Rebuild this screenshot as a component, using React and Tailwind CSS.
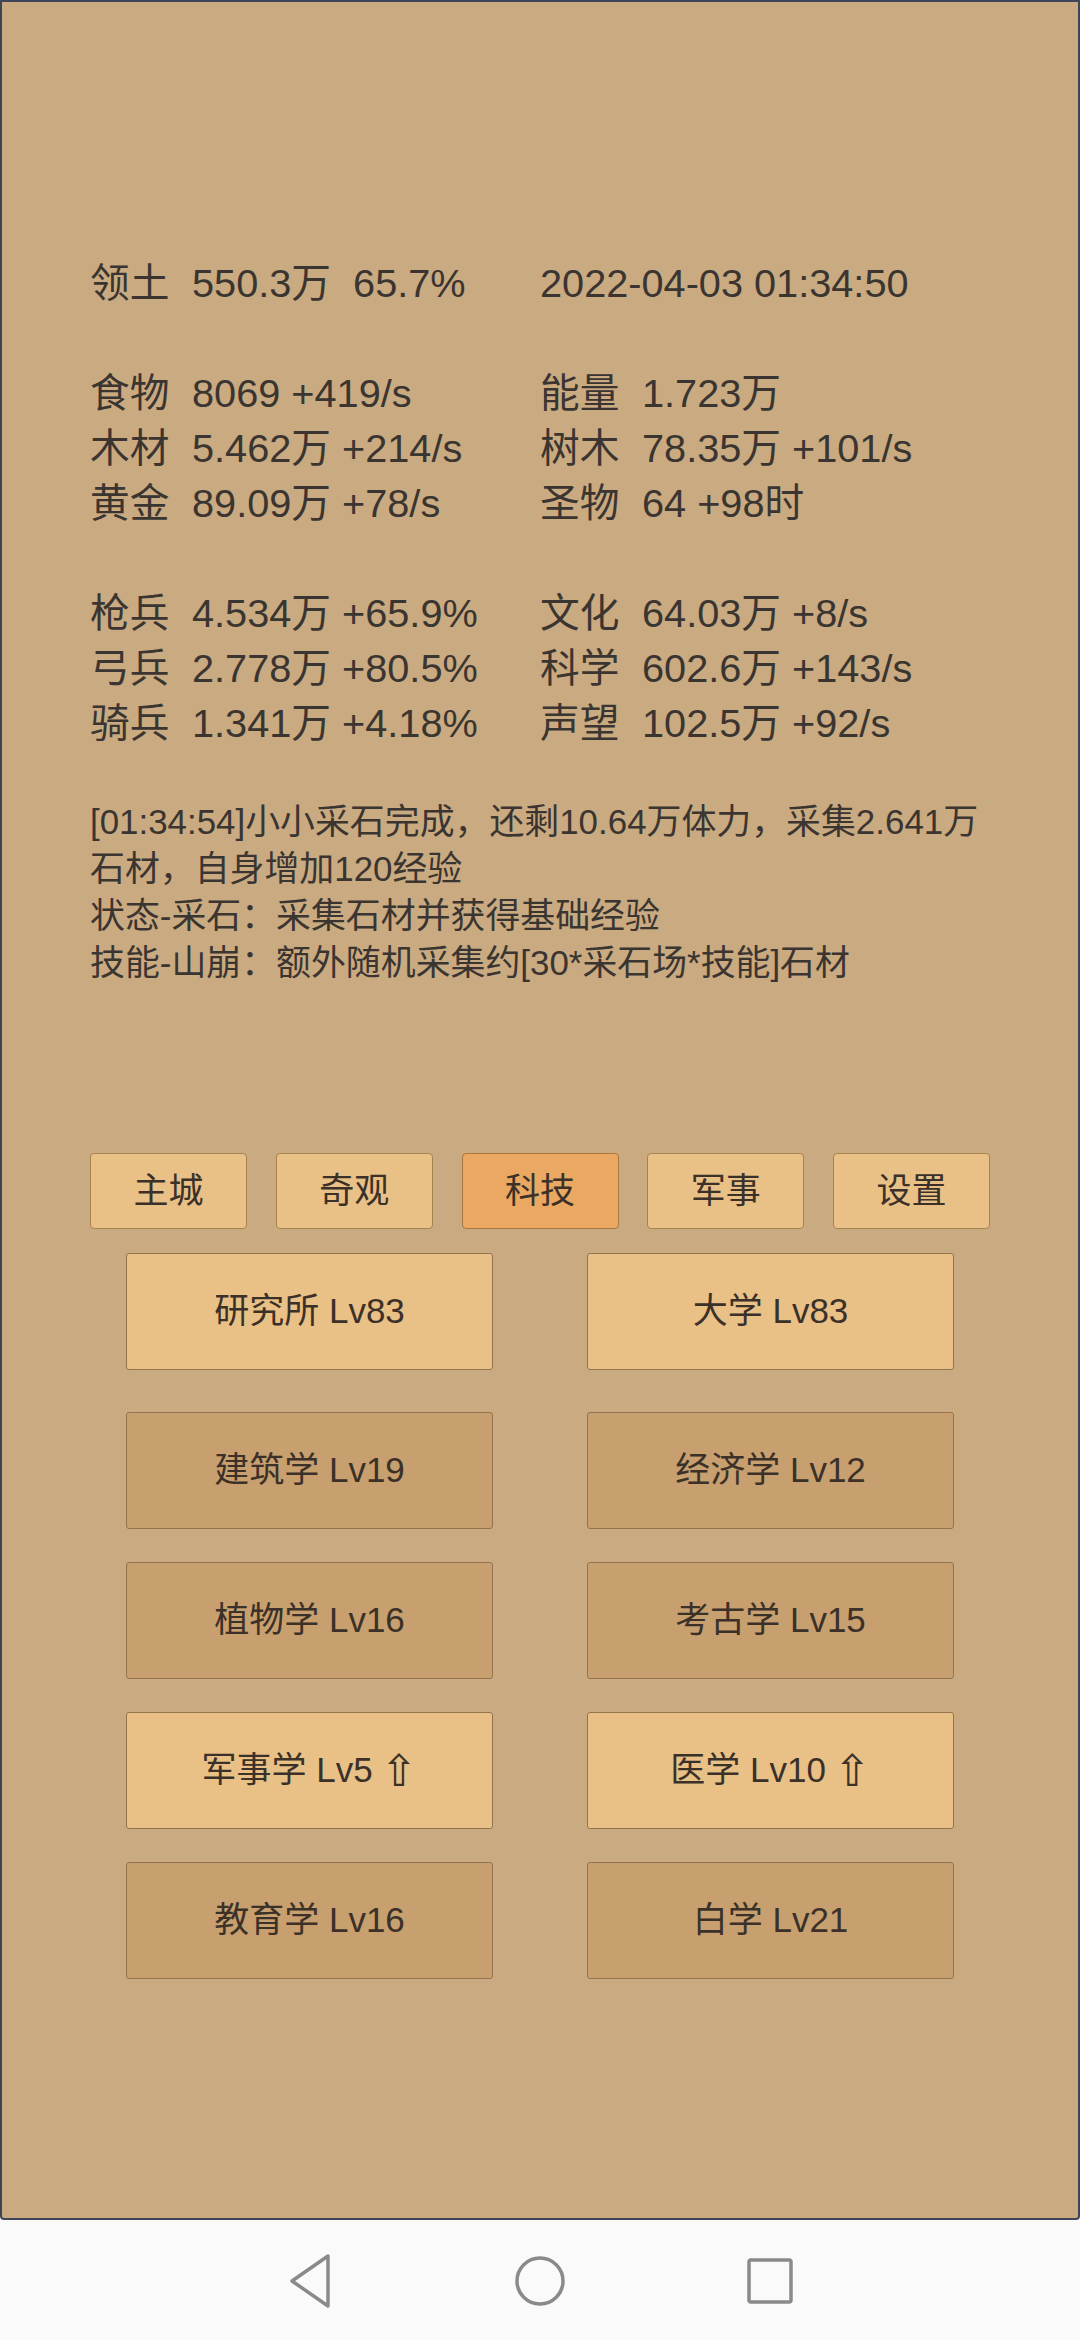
import React from "react";

const FONT = { fontFamily: '"Liberation Sans", "Noto Sans CJK SC", sans-serif' };

const left = [
  ["领土", "550.3万  65.7%"],
  null,
  ["食物", "8069 +419/s"],
  ["木材", "5.462万 +214/s"],
  ["黄金", "89.09万 +78/s"],
  null,
  ["枪兵", "4.534万 +65.9%"],
  ["弓兵", "2.778万 +80.5%"],
  ["骑兵", "1.341万 +4.18%"],
];
const right = [
  [null, "2022-04-03 01:34:50"],
  null,
  ["能量", "1.723万"],
  ["树木", "78.35万 +101/s"],
  ["圣物", "64 +98时"],
  null,
  ["文化", "64.03万 +8/s"],
  ["科学", "602.6万 +143/s"],
  ["声望", "102.5万 +92/s"],
];

function Cell({ item }) {
  if (!item) return <div className="h-[55px]" />;
  const [label, value] = item;
  return (
    <div className="h-[55px] flex items-center whitespace-pre">
      {label ? <span className="w-[102px] shrink-0">{label}</span> : null}
      <span>{value}</span>
    </div>
  );
}

const tabs = ["主城", "奇观", "科技", "军事", "设置"];

const rows = [
  [["研究所 Lv83", true], ["大学 Lv83", true]],
  [["建筑学 Lv19", false], ["经济学 Lv12", false]],
  [["植物学 Lv16", false], ["考古学 Lv15", false]],
  [["军事学 Lv5", true, true], ["医学 Lv10", true, true]],
  [["教育学 Lv16", false], ["白学 Lv21", false]],
];

function Btn({ text, light, up }) {
  return (
    <div
      className={
        "w-[367px] h-[117px] flex items-center justify-center rounded-[3px] border border-[#94744f] text-[35px] text-[#3b3128] " +
        (light ? "bg-[#e9c086]" : "bg-[#c89f6e]")
      }
    >
      <span>{text}</span>
      {up ? (
        <span className="ml-[8px] text-[44px] leading-none" style={{ fontFamily: '"DejaVu Sans", sans-serif' }}>
          ⇧
        </span>
      ) : null}
    </div>
  );
}

export default function App() {
  return (
    <div className="w-[1080px] h-[2340px] flex flex-col bg-[#fafafa]" style={FONT}>
      <div className="h-[2220px] bg-[#caaa80] border-2 border-[#3f4558] rounded-b-[4px] flex flex-col px-[88px] text-[#3a3531]">
        <div className="mt-[254px] flex text-[39.7px]">
          <div className="w-[450px] flex flex-col">
            {left.map((it, i) => (
              <Cell key={i} item={it} />
            ))}
          </div>
          <div className="flex flex-col">
            {right.map((it, i) => (
              <Cell key={i} item={it} />
            ))}
          </div>
        </div>
        <div className="mt-[47px] w-[900px] text-[34.9px] leading-[47px]">
          <p>[01:34:54]小小采石完成，还剩10.64万体力，采集2.641万石材，自身增加120经验</p>
          <p>状态-采石：采集石材并获得基础经验</p>
          <p>技能-山崩：额外随机采集约[30*采石场*技能]石材</p>
        </div>
        <div className="mt-[167px] w-[900px] flex justify-between">
          {tabs.map((t) => (
            <div
              key={t}
              className={
                "w-[157px] h-[76px] flex items-center justify-center rounded-[4px] border text-[35px] text-[#3b3128] " +
                (t === "科技" ? "bg-[#eba862] border-[#a9773f]" : "bg-[#e9c086] border-[#a8834f]")
              }
            >
              {t}
            </div>
          ))}
        </div>
        <div className="flex flex-col px-[36px] mt-[24px]">
          {rows.map((r, i) => (
            <div
              key={i}
              className={"flex justify-between " + (i === 0 ? "" : i === 1 ? "mt-[42px]" : "mt-[33px]")}
            >
              {r.map(([text, light, up]) => (
                <Btn key={text} text={text} light={light} up={up} />
              ))}
            </div>
          ))}
        </div>
      </div>
      <div className="h-[120px] flex items-center justify-center gap-[170px] pt-[2px]">
        <div className="w-[60px] h-[60px] flex items-center justify-center">
          <svg width="48" height="56" viewBox="0 0 48 56">
            <path
              d="M42 3 L42 53 L6 28 Z"
              fill="none"
              stroke="#8a8a8a"
              strokeWidth="3.5"
              strokeLinejoin="round"
            />
          </svg>
        </div>
        <div className="w-[60px] h-[60px] flex items-center justify-center">
          <svg width="54" height="54" viewBox="0 0 54 54">
            <circle cx="27" cy="27" r="23" fill="none" stroke="#8a8a8a" strokeWidth="3.5" />
          </svg>
        </div>
        <div className="w-[60px] h-[60px] flex items-center justify-center">
          <svg width="48" height="48" viewBox="0 0 48 48">
            <rect x="3" y="3" width="42" height="42" rx="2" fill="none" stroke="#8a8a8a" strokeWidth="3.5" />
          </svg>
        </div>
      </div>
    </div>
  );
}
